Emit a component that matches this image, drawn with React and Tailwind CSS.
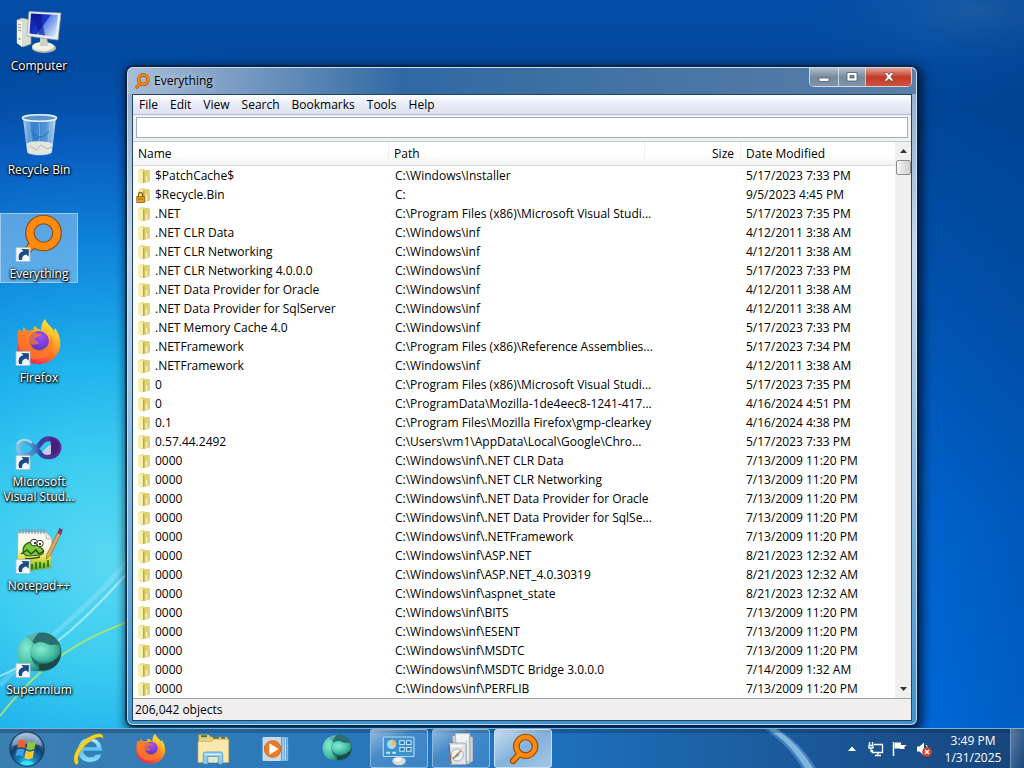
import React, { useState } from "react";

const INF = "C:\\Windows\\inf";
const OLD = "7/13/2009 11:20 PM";

const ROWS = [
  ["$PatchCache$", "C:\\Windows\\Installer", "5/17/2023 7:33 PM"],
  ["$Recycle.Bin", "C:", "9/5/2023 4:45 PM", true],
  [".NET", "C:\\Program Files (x86)\\Microsoft Visual Studi...", "5/17/2023 7:35 PM"],
  [".NET CLR Data", INF, "4/12/2011 3:38 AM"],
  [".NET CLR Networking", INF, "4/12/2011 3:38 AM"],
  [".NET CLR Networking 4.0.0.0", INF, "5/17/2023 7:33 PM"],
  [".NET Data Provider for Oracle", INF, "4/12/2011 3:38 AM"],
  [".NET Data Provider for SqlServer", INF, "4/12/2011 3:38 AM"],
  [".NET Memory Cache 4.0", INF, "5/17/2023 7:33 PM"],
  [".NETFramework", "C:\\Program Files (x86)\\Reference Assemblies...", "5/17/2023 7:34 PM"],
  [".NETFramework", INF, "4/12/2011 3:38 AM"],
  ["0", "C:\\Program Files (x86)\\Microsoft Visual Studi...", "5/17/2023 7:35 PM"],
  ["0", "C:\\ProgramData\\Mozilla-1de4eec8-1241-417...", "4/16/2024 4:51 PM"],
  ["0.1", "C:\\Program Files\\Mozilla Firefox\\gmp-clearkey", "4/16/2024 4:38 PM"],
  ["0.57.44.2492", "C:\\Users\\vm1\\AppData\\Local\\Google\\Chro...", "5/17/2023 7:33 PM"],
  ["0000", INF + "\\.NET CLR Data", OLD],
  ["0000", INF + "\\.NET CLR Networking", OLD],
  ["0000", INF + "\\.NET Data Provider for Oracle", OLD],
  ["0000", INF + "\\.NET Data Provider for SqlSe...", OLD],
  ["0000", INF + "\\.NETFramework", OLD],
  ["0000", INF + "\\ASP.NET", "8/21/2023 12:32 AM"],
  ["0000", INF + "\\ASP.NET_4.0.30319", "8/21/2023 12:32 AM"],
  ["0000", INF + "\\aspnet_state", "8/21/2023 12:32 AM"],
  ["0000", INF + "\\BITS", OLD],
  ["0000", INF + "\\ESENT", OLD],
  ["0000", INF + "\\MSDTC", OLD],
  ["0000", INF + "\\MSDTC Bridge 3.0.0.0", "7/14/2009 1:32 AM"],
  ["0000", INF + "\\PERFLIB", OLD],
];

function Defs() {
  return (
    <svg className="absolute size-0" aria-hidden="true">
      <defs>
        <linearGradient id="folder" x1="0" x2="1" y1="0" y2="0">
          <stop offset="0" stopColor="#f6f0b4" />
          <stop offset="0.55" stopColor="#e8da78" />
          <stop offset="1" stopColor="#d8c95f" />
        </linearGradient>
        <linearGradient id="screen" x1="0" x2="1" y1="0.2" y2="0.8">
          <stop offset="0" stopColor="#0a1a9c" />
          <stop offset="0.48" stopColor="#1d3bd0" />
          <stop offset="0.5" stopColor="#5c86e8" />
          <stop offset="1" stopColor="#d5e6fb" />
        </linearGradient>
        <linearGradient id="glass" x1="0" x2="1">
          <stop offset="0" stopColor="#d5ebfa" stopOpacity="0.85" />
          <stop offset="0.3" stopColor="#5fa2e2" stopOpacity="0.55" />
          <stop offset="0.7" stopColor="#7db5e8" stopOpacity="0.65" />
          <stop offset="1" stopColor="#dceefa" stopOpacity="0.9" />
        </linearGradient>
        <linearGradient id="fox" x1="0.8" y1="0" x2="0.25" y2="1">
          <stop offset="0" stopColor="#fff04a" />
          <stop offset="0.35" stopColor="#ffb022" />
          <stop offset="0.65" stopColor="#ff6a2c" />
          <stop offset="1" stopColor="#e8205c" />
        </linearGradient>
        <radialGradient id="foxglobe" cx="0.6" cy="0.3" r="0.8">
          <stop offset="0" stopColor="#a44cf5" />
          <stop offset="1" stopColor="#4a33b8" />
        </radialGradient>
        <radialGradient id="teal" cx="0.35" cy="0.35" r="0.8">
          <stop offset="0" stopColor="#86ecd2" />
          <stop offset="0.6" stopColor="#44bda2" />
          <stop offset="1" stopColor="#1c7a6c" />
        </radialGradient>
        <linearGradient id="vs" x1="0" x2="1">
          <stop offset="0" stopColor="#7fc4e6" />
          <stop offset="0.4" stopColor="#3b7fc4" />
          <stop offset="0.55" stopColor="#3a3f9e" />
          <stop offset="1" stopColor="#5a2b91" />
        </linearGradient>
        <radialGradient id="orb" cx="0.5" cy="0.95" r="0.9">
          <stop offset="0" stopColor="#35e0ff" />
          <stop offset="0.3" stopColor="#1580b8" />
          <stop offset="0.65" stopColor="#123e6c" />
          <stop offset="1" stopColor="#7fa6c6" />
        </radialGradient>
        <linearGradient id="ie" x1="0" x2="0" y1="0" y2="1">
          <stop offset="0" stopColor="#c9f1ff" />
          <stop offset="0.5" stopColor="#58c3f2" />
          <stop offset="1" stopColor="#8fdcfa" />
        </linearGradient>
        <linearGradient id="pad" x1="0" x2="0" y1="0" y2="1">
          <stop offset="0" stopColor="#ffffff" />
          <stop offset="0.45" stopColor="#f4f8d8" />
          <stop offset="0.65" stopColor="#e6e44a" />
          <stop offset="1" stopColor="#3f9e1f" />
        </linearGradient>
      </defs>
    </svg>
  );
}

function Svg({ size = "size-12", box = 48, children }) {
  return (
    <svg viewBox={`0 0 ${box} ${box}`} className={`${size} shrink-0`} aria-hidden="true">
      {children}
    </svg>
  );
}

function Shortcut() {
  return (
    <g>
      <rect x="1" y="33.5" width="14" height="14" fill="#f4f8fc" stroke="#a9bccb" strokeWidth="0.8" />
      <path d="M4 46c-1.200-5 .6-8.300 4.400-8.800L6.400 35l7.600.2-.4 7.600-2.200-2.400c-2.800.4-4.600 2-4.200 5.600z" fill="#174a86" />
    </g>
  );
}

function ComputerIcon() {
  return (
    <Svg>
      <path d="M2 14l5-2 9 2v24l-8 3-6-4z" fill="#d9dcd5" stroke="#8d9494" strokeWidth="0.7" />
      <path d="M2 14l5 2v25l-5-4z" fill="#f3f4ee" />
      <path d="M3 18l3 1M3 21l3 1M3 24l3 1" stroke="#8a9a8a" strokeWidth="1" />
      <circle cx="4.500" cy="33" r="1" fill="#62b846" />
      <ellipse cx="29" cy="42" rx="12" ry="5" fill="#b9b9b0" />
      <ellipse cx="28" cy="40.500" rx="11" ry="4.600" fill="#f0efe8" />
      <path d="M25 31h7l1 9h-8z" fill="#cfcfc8" />
      <path d="M14 5.500L46 7l-3 27-31-4z" fill="#eceef0" stroke="#98a0a8" strokeWidth="0.7" />
      <path d="M16 7.500l27 1.400-2.500 22-26-3.300z" fill="url(#screen)" />
      <path d="M18 7.800l8 .4 4 21.200-6-.8z" fill="#0a1690" opacity="0.6" />
    </Svg>
  );
}

function BinIcon() {
  return (
    <Svg>
      <path d="M8 8l4 34c1 5 23 5 25 0l4-34z" fill="url(#glass)" />
      <path d="M11.500 34l1 8c2 4 22 4 24 0l1-8c-4-3-22-4-26 0z" fill="#ece9df" opacity="0.95" />
      <path d="M15 36l6 4 5-5 6 4 5-2" stroke="#b9b6a8" strokeWidth="1" fill="none" />
      <path d="M14 13l3 20M35 13l-2 20M24.500 13v18" stroke="#e2f1fc" strokeWidth="0.8" opacity="0.4" fill="none" />
      <path d="M16 20c3 6 8 8 13 6l5-5M18 25l3 4 4-1" stroke="#2a62a8" strokeWidth="1.200" opacity="0.6" fill="none" />
      <ellipse cx="24.500" cy="8" rx="17" ry="3.200" fill="#5a93cc" stroke="#e8f4fc" strokeWidth="1.600" />
    </Svg>
  );
}

function EverythingIcon({ size, shortcut }) {
  return (
    <Svg size={size}>
      {shortcut ? (
        <g>
          <path d="M20 28L10 39" stroke="#8a4a10" strokeWidth="8" strokeLinecap="round" />
          <circle cx="28.500" cy="19" r="13.500" fill="none" stroke="#8a4a10" strokeWidth="9.600" />
          <path d="M20 28L10 39" stroke="#ff8a10" strokeWidth="6" strokeLinecap="round" />
          <circle cx="28.500" cy="19" r="13.500" fill="none" stroke="#ff8a10" strokeWidth="7.400" />
          <Shortcut />
        </g>
      ) : (
        <g>
          <path d="M19 31L9 42" stroke="#9a4a08" strokeWidth="9.500" strokeLinecap="round" />
          <circle cx="28" cy="20" r="14" fill="none" stroke="#9a4a08" strokeWidth="10" />
          <path d="M19 31L9 42" stroke="#ff8a10" strokeWidth="6" strokeLinecap="round" />
          <circle cx="28" cy="20" r="14" fill="none" stroke="#ff8a10" strokeWidth="6.500" />
        </g>
      )}
    </Svg>
  );
}

function FirefoxIcon({ size, shortcut }) {
  return (
    <Svg size={size}>
      <path d="M4 11l3 3c1-1 1-3 1-5 2 1 3 3 4 4l7-1c-1-2 0-3 1-4 2 3 5 3 6 5 0-5 1-9 4-12 2 5 6 7 9 12l1-3c5 7 6 14 5 19-2 10-10 17-21 17C11 46 1 38 2 26c0-6 0-10 2-15z" fill="url(#fox)" />
      <circle cx="24" cy="23" r="10" fill="url(#foxglobe)" />
      <path d="M3 16c5-4 12-5 18-1l6 1c-2 3-7 3-8 6 3 0 5 2 4 4-3 1-5 1-7 0 2 6 8 7 12 5 6-3 8-8 7-13 5 6 4 14-1 19-8 7-22 6-28-4-3-6-4-11-3-17z" fill="#ff7a28" opacity="0.7" />
      {shortcut && <Shortcut />}
    </Svg>
  );
}

function VisualStudioIcon() {
  return (
    <Svg>
      <path d="M3 26c1-7 9-8 14-3l8 8c5 6 18 5 19-5 0-10-13-12-18-5l-8 9c-5 5-13 4-15-4z" fill="none" stroke="url(#vs)" strokeWidth="5" />
      <path d="M28 29c4 7 16 5 16-4 0-6-4-9-9-9 2 5 1 10-7 13z" fill="#4a1f7c" />
      <path d="M27 30l9-8v10c-3 2-7 1-9-2z" fill="#d8eaf6" opacity="0.85" />
      <path d="M2 22c3-5 10-6 15-1" stroke="#bfe8f8" strokeWidth="2" fill="none" opacity="0.8" />
      <Shortcut />
    </Svg>
  );
}

function NotepadIcon() {
  return (
    <Svg>
      <path d="M3 6h28l6 7-1 29-29 4-5-6z" fill="url(#pad)" stroke="#9aa09a" strokeWidth="0.7" />
      <path d="M5 3v5M8 3v5M11 3v5M14 3v5M17 3v5M20 3v5M23 3v5M26 3v5M29 3v5" stroke="#8f959c" strokeWidth="1.200" />
      <path d="M31 6v7h6" fill="#e8ecd8" stroke="#9aa09a" strokeWidth="0.6" />
      <path d="M8 25c0-7 7-11 12-7l6 4c4 2 3 6-1 7l-11 1c-4 0-6-2-6-5z" fill="#7cc838" stroke="#2c5c16" strokeWidth="1.200" />
      <path d="M6 28l6-4 4 4 5-4 3 4 5-3M10 32c5 2 10 0 15-1" stroke="#23400f" strokeWidth="1.300" fill="none" />
      <circle cx="19" cy="16.500" r="3.400" fill="#fff" stroke="#333" strokeWidth="1" />
      <circle cx="25" cy="17.500" r="3.200" fill="#fff" stroke="#333" strokeWidth="1" />
      <circle cx="20" cy="17" r="1" />
      <circle cx="25" cy="18" r="1" />
      <path d="M17 43v-5M21 43v-7M25 42v-6M29 42v-5M33 41v-7" stroke="#176f14" strokeWidth="1.600" />
      <path d="M31 33l1-5L44 4l3 1.500L35 30z" fill="#e7a856" stroke="#8a5a22" strokeWidth="0.6" />
      <path d="M42.500 7l1.800-5 3.400 1.500L46 9z" fill="#7d3a6c" />
      <Shortcut />
    </Svg>
  );
}

function SupermiumIcon({ size, shortcut }) {
  return (
    <Svg size={size}>
      <circle cx="27" cy="22" r="19.500" fill="#2a6f70" />
      <path d="M12 6C0 14-1 30 10 38c6 4 13 4 18 1-7-2-11-7-12-13-1-5 0-9 3-12-2-3-4-6-7-8z" fill="url(#teal)" />
      <path d="M11 7c3-2 8-4 13-4-3 2-5 5-6 8z" fill="#5fb0a8" />
      <path d="M16 18c3-6 10-8 16-4 4 2 8 0 12 1 3 8-1 14-9 17-9 3-22-2-19-14z" fill="url(#teal)" />
      <path d="M24 40c11 2 21-5 22-17-4 8-13 12-22 11z" fill="#1a4a48" />
      {shortcut && <Shortcut />}
    </Svg>
  );
}

function StartOrb() {
  return (
    <Svg size="size-9">
      <circle cx="24" cy="24" r="23.500" fill="#183a5e" />
      <circle cx="24" cy="24" r="22" fill="url(#orb)" />
      <path d="M4 20C7 8 15 3 24 3s17 5 20 17c-9-4-30-4-40 0z" fill="#dcebf6" opacity="0.4" />
      <path d="M13 13c4-2 7-2 10 0l-2 10c-3-2-7-2-10 0z" fill="#f0622c" />
      <path d="M25 14c4 2 7 2 11 0l-2 10c-4 2-8 2-11 0z" fill="#8cc63e" />
      <path d="M10.500 25c4-2 7-2 10 0l-2 9c-3-2-7-2-10 0z" fill="#3ba0e6" />
      <path d="M22.500 26c3 2 7 2 11 0l-2 10c-4 2-8 2-11 0z" fill="#fdc92c" />
      <ellipse cx="24" cy="43" rx="9" ry="3" fill="#2ee6ff" opacity="0.9" />
    </Svg>
  );
}

function IeIcon() {
  return (
    <Svg size="size-8">
      <path d="M25 7c11 0 19 8 19 20H16c0 5 4 9 10 9 4 0 7-1 8-4h9c-2 8-9 12-18 12-11 0-18-8-18-18S14 7 25 7zm-9 14h19c0-5-4-8-9.500-8S16 16 16 21z" fill="url(#ie)" stroke="#2488c8" strokeWidth="1" fillRule="evenodd" />
      <path d="M4 47C-5 36 12 8 34 2c8-2 12 0 11 6-4-4-13-1-20 5C13 21 5 35 8 43c0 3-2 5-4 4z" fill="#f8d428" stroke="#c79a12" strokeWidth="0.7" />
    </Svg>
  );
}

function ExplorerIcon() {
  return (
    <Svg size="size-9">
      <path d="M5 5h13l3 3h22v32H5z" fill="#e9ce78" stroke="#b8964a" strokeWidth="0.8" />
      <path d="M8 7h8M24 9h8M35 9h5" stroke="#4b6d58" strokeWidth="2.500" />
      <path d="M4 14h18l3-3h20v31H4z" fill="#f9e9ad" stroke="#c7a85a" strokeWidth="0.8" />
      <path d="M11 44V31q0-3 3-3h20q3 0 3 3v13h-6V34H17v10z" fill="#8dcdf0" stroke="#4a94c4" strokeWidth="1" />
      <path d="M13 31h22" stroke="#e4f6ff" strokeWidth="1.500" />
      <path d="M20 37h8v5h-8z" fill="#cfe8f4" />
    </Svg>
  );
}

function PlayerIcon() {
  return (
    <Svg size="size-8">
      <path d="M10 7h33v34H10z" fill="#5f9fd4" stroke="#b7d8ef" strokeWidth="1" />
      <path d="M36 8v32M39.500 8v32" stroke="#d5e9f7" strokeWidth="1.600" />
      <path d="M6 7h26v34H6z" fill="#c8d7e4" stroke="#eef5fa" strokeWidth="1" />
      <circle cx="20.500" cy="24" r="12.500" fill="#f07a20" stroke="#c95508" strokeWidth="1" />
      <path d="M15.500 15.500l14 8.500-14 8.500z" fill="#fff" />
    </Svg>
  );
}

function ControlPanelIcon() {
  return (
    <Svg size="size-9">
      <rect x="3" y="8" width="41" height="26" rx="1.500" fill="#4291cf" stroke="#a8dcfa" strokeWidth="1.600" />
      <circle cx="14" cy="18" r="6" fill="#a8dcf6" />
      <path d="M14 18v-7a7 7 0 0 1 6 9z" fill="#f1c04a" />
      <path d="M7 29h5M15 29h5" stroke="#bfe6fa" strokeWidth="2.500" />
      <path d="M25 13h6v5h-6zM34 13h6v5h-6zM25 22h6v5h-6zM34 22h6v5h-6z" fill="#3074b4" stroke="#c5eaff" strokeWidth="1.400" />
      <ellipse cx="24" cy="40" rx="9" ry="5.500" fill="#d7dade" />
      <ellipse cx="22" cy="38" rx="5" ry="2.500" fill="#f8f9fa" />
    </Svg>
  );
}

function InstallerIcon() {
  return (
    <Svg size="size-9">
      <path d="M12 6h22l6 2v32l-6 4H16z" fill="#cfd5d8" stroke="#7c888e" strokeWidth="0.8" />
      <path d="M16 3h20v38H20z" fill="#f1f3f4" stroke="#8a969c" strokeWidth="0.8" />
      <path d="M8 16h20l3 2v27H10z" fill="#dfe3e5" stroke="#7c888e" strokeWidth="0.8" />
      <path d="M31 12v28M35 6v34" stroke="#aab3b8" strokeWidth="1.200" />
      <path d="M11 20h15" stroke="#fff" strokeWidth="2" />
      <circle cx="19" cy="32" r="8" fill="#eef3f6" stroke="#93a3ac" strokeWidth="1" />
      <path d="M19 32l5-6M19 32l-6 5" stroke="#c9834f" strokeWidth="2.200" />
      <circle cx="19" cy="32" r="2" fill="#7b8f9c" />
      <path d="M8 18l3 26" stroke="#8a4a36" strokeWidth="1.200" />
    </Svg>
  );
}

function FolderIcon({ locked }) {
  return (
    <Svg size="size-4" box={16}>
      <path d="M2 2.500L5 1h3l1 1h4.500L14 13l-4 1.500-5 1L2 13.500z" fill="url(#folder)" />
      <path d="M9 2.500h4.500L14 13l-5 1.500z" fill="#e0d272" />
      <path d="M2 2.500l5 1V15l-5-1.500z" fill="#f5efb0" />
      <path d="M7 3.500V15l1.500-.3V3z" fill="#bca944" />
      <path d="M10.500 8v5.500" stroke="#f8f2c4" strokeWidth="1.500" />
      {locked && (
        <g>
          <path d="M2.500 10V7.500a2 2 0 0 1 4 0V10" fill="none" stroke="#8a6516" strokeWidth="1.300" />
          <rect x="0.800" y="9.500" width="7.500" height="6" fill="#e2a41c" stroke="#8f5d0a" strokeWidth="0.8" />
          <path d="M2 12h5" stroke="#8f5d0a" strokeWidth="0.900" />
        </g>
      )}
    </Svg>
  );
}

const DESKTOP = [
  { label: "Computer", icon: <ComputerIcon /> },
  { label: "Recycle Bin", icon: <BinIcon /> },
  { label: "Everything", icon: <EverythingIcon shortcut />, selected: true },
  { label: "Firefox", icon: <FirefoxIcon shortcut /> },
  { label: "Microsoft Visual Stud...", icon: <VisualStudioIcon /> },
  { label: "Notepad++", icon: <NotepadIcon /> },
  { label: "Supermium", icon: <SupermiumIcon shortcut /> },
];

function DesktopIcons() {
  return (
    <ul className="w-[78px] shrink-0 pt-[5px]">
      {DESKTOP.map((d) => (
        <li key={d.label} className="h-[104px]">
          <button
            type="button"
            className={`flex w-full flex-col items-center gap-1 border pb-px text-center leading-[15px] text-white [text-shadow:0_1px_2px_#000,1px_1px_2px_#000,0_0_3px_#000] ${
              d.selected ? "border-[#9cc8f0] bg-[#8fc2ee]/60" : "border-transparent"
            }`}
          >
            {d.icon}
            <span>{d.label}</span>
          </button>
        </li>
      ))}
    </ul>
  );
}

function Wallpaper() {
  return (
    <svg viewBox="0 0 1024 768" preserveAspectRatio="none" className="absolute inset-0 size-full" aria-hidden="true">
      <defs>
        <linearGradient id="bgv" x1="0" x2="0" y1="0" y2="1">
          <stop offset="0" stopColor="#054ca8" />
          <stop offset="0.14" stopColor="#004697" />
          <stop offset="0.4" stopColor="#0053b0" />
          <stop offset="0.68" stopColor="#0063ce" />
          <stop offset="1" stopColor="#006adb" />
        </linearGradient>
        <radialGradient id="bgl" gradientUnits="userSpaceOnUse" cx="0" cy="0" r="1" gradientTransform="translate(110 560) scale(600 520)">
          <stop offset="0" stopColor="#5ad8f2" />
          <stop offset="0.2" stopColor="#3cccf0" />
          <stop offset="0.38" stopColor="#1fb2ec" />
          <stop offset="0.6" stopColor="#1088de" stopOpacity="0.95" />
          <stop offset="0.8" stopColor="#0a62c6" stopOpacity="0.8" />
          <stop offset="1" stopColor="#0550b4" stopOpacity="0" />
        </radialGradient>
        <radialGradient id="bgt" gradientUnits="userSpaceOnUse" cx="0" cy="0" r="1" gradientTransform="translate(980 10) scale(200 80)">
          <stop offset="0" stopColor="#3a7aa8" stopOpacity="0.45" />
          <stop offset="1" stopColor="#00499f" stopOpacity="0" />
        </radialGradient>
        <linearGradient id="bgr" x1="0" x2="1">
          <stop offset="0.9" stopColor="#003a80" stopOpacity="0" />
          <stop offset="1" stopColor="#003a80" stopOpacity="0.25" />
        </linearGradient>
      </defs>
      <path d="M0 0h1024v768H0z" fill="url(#bgv)" />
      <path d="M0 0h1024v768H0z" fill="url(#bgl)" />
      <path d="M0 0h1024v768H0z" fill="url(#bgt)" />
      <path d="M0 0h1024v768H0z" fill="url(#bgr)" />
      <g fill="none">
        <path d="M0 676C50 655 90 615 130 570" stroke="#d8f8fc" strokeWidth="2" opacity="0.6" />
        <path d="M0 685C60 625 100 600 140 545" stroke="#e0fafc" strokeWidth="5" opacity="0.2" />
        <path d="M0 716C40 665 80 635 150 615" stroke="#a8e478" strokeWidth="2" opacity="0.9" />
      </g>
    </svg>
  );
}

function Caption() {
  const base = "flex h-[18px] items-center justify-center";
  return (
    <div className="mr-1 flex self-start overflow-hidden rounded-b-[5px] border border-t-0 border-white/70">
      <button type="button" aria-label="Minimize" className={`${base} w-7 bg-linear-to-b from-[#b3c0cd] via-[#76899c] via-50% to-[#7d95aa]`}>
        <svg viewBox="0 0 14 12" className="h-3 w-3.5"><path d="M2 7h10v3.500H2z" fill="#fff" stroke="#46586b" strokeWidth="0.8" /></svg>
      </button>
      <button type="button" aria-label="Maximize" className={`${base} w-[27px] border-l border-white/60 bg-linear-to-b from-[#b3c0cd] via-[#76899c] via-50% to-[#7d95aa]`}>
        <svg viewBox="0 0 14 12" className="h-3 w-3.5"><path d="M2 1.500h10v8.500H2zM5 4.500v2.500h4V4.500z" fill="#fff" stroke="#46586b" strokeWidth="0.8" fillRule="evenodd" /></svg>
      </button>
      <button type="button" aria-label="Close" className={`${base} w-[46px] border-l border-white/60 bg-linear-to-b from-[#e0a398] via-[#c23a28] via-50% to-[#d0523a]`}>
        <svg viewBox="0 0 14 12" className="h-3 w-3.5"><path d="M2 1.500h3.200L7 3.800l1.800-2.300H12L8.800 5.700 12 10H8.800L7 7.700 5.200 10H2l3.200-4.300z" fill="#fff" stroke="#6b2c26" strokeWidth="0.6" /></svg>
      </button>
    </div>
  );
}

function Scrollbar() {
  return (
    <div className="flex w-4 shrink-0 flex-col items-center bg-[#efefef]">
      <button type="button" aria-label="Scroll up" className="flex h-[18px] w-full items-center justify-center">
        <svg viewBox="0 0 7 4" className="h-1 w-[7px]"><path d="M0 4l3.500-4L7 4z" fill="#333" /></svg>
      </button>
      <div className="h-[15px] w-[15px] rounded-xs border border-[#8f8f8f] bg-linear-to-r from-[#f5f5f5] to-[#cfcfd0]" />
      <div className="flex-1" />
      <button type="button" aria-label="Scroll down" className="flex h-[18px] w-full items-center justify-center">
        <svg viewBox="0 0 7 4" className="h-1 w-[7px]"><path d="M0 0l3.500 4L7 0z" fill="#333" /></svg>
      </button>
    </div>
  );
}

function FileTable() {
  const head = "h-6 border-b border-[#dcdcdc] p-0 font-normal";
  return (
    <table className="w-full table-fixed border-separate border-spacing-0">
      <colgroup>
        <col className="w-64" />
        <col className="w-64" />
        <col className="w-24" />
        <col />
      </colgroup>
      <thead className="bg-linear-to-b from-white from-50% to-[#f2f2f4]">
        <tr>
          <th className={`${head} border-r border-r-[#f0f0f2] pl-[5px] text-left`}>Name</th>
          <th className={`${head} border-r border-r-[#f0f0f2] pl-[5px] text-left`}>Path</th>
          <th className={`${head} border-r border-r-[#f0f0f2] pr-[6px] text-right`}>Size</th>
          <th className={`${head} pl-[5px] text-left`}>Date Modified</th>
        </tr>
      </thead>
      <tbody>
        {ROWS.map(([name, path, date, locked], i) => (
          <tr key={i} className="h-[19px] whitespace-nowrap">
            <td className="p-0 pl-[3px]">
              <span className="flex h-[19px] items-center gap-[3px]">
                <FolderIcon locked={locked} />
                {name}
              </span>
            </td>
            <td className="p-0 pl-1.5">{path}</td>
            <td className="p-0" />
            <td className="p-0 pl-[5px]">{date}</td>
          </tr>
        ))}
      </tbody>
    </table>
  );
}

function EverythingWindow() {
  const [query, setQuery] = useState("");
  return (
    <section className="mt-[66px] mr-[106px] mb-[2px] ml-12 flex min-w-0 flex-1 flex-col rounded-[7px] border border-[#10253c] bg-linear-to-b from-[#8fa9c6] from-0% via-[#c3d6ea] via-28% to-[#3d93cc] to-100% px-[5px] pb-[4px] text-black shadow-[0_0_0_1px_rgba(0,20,50,0.5),2px_3px_10px_3px_rgba(0,15,40,0.75),inset_0_0_0_1px_rgba(220,240,255,0.75)]">
      <header className="-mx-1 flex h-[27px] items-center rounded-t-[6px] border-t border-[#c9dbec] bg-linear-to-r from-[#a9bdd6] via-[#2f69a3] via-35% to-[#5b7fa6] pl-1.5">
        <EverythingIcon size="size-4" />
        <h1 className="flex-1 pl-1 [text-shadow:0_0_6px_rgba(255,255,255,0.7)]">Everything</h1>
        <Caption />
      </header>
      <div className="flex min-h-0 flex-1 flex-col border border-[#1f4468] bg-white">
        <nav className="flex h-5 items-center gap-3 border-b border-[#b8bcd0] bg-linear-to-b from-white via-[#e8ebf6] via-50% to-[#dde1f2] pl-1.5">
          {["File", "Edit", "View", "Search", "Bookmarks", "Tools", "Help"].map((m) => (
            <button key={m} type="button">{m}</button>
          ))}
        </nav>
        <div className="border-b border-[#c4c8cf] bg-[#f0f1f4] px-[3px] pt-0.5 pb-[3px]">
          <input
            type="text"
            aria-label="Search"
            value={query}
            onChange={(e) => setQuery(e.target.value)}
            className="block h-[21px] w-full border border-[#a5abbd] bg-white px-1 outline-none"
          />
        </div>
        <div className="flex h-0 min-h-0 flex-1">
          <div className="min-w-0 flex-1 overflow-hidden">
            <FileTable />
          </div>
          <Scrollbar />
        </div>
        <footer className="flex h-[22px] items-center border-t border-[#a3a3a3] bg-[#f0eeef] pl-0.5">206,042 objects</footer>
      </div>
    </section>
  );
}

const TASKS = [
  ["Internet Explorer", <IeIcon />, ""],
  ["Firefox", <FirefoxIcon size="size-8" />, ""],
  ["Windows Explorer", <ExplorerIcon />, ""],
  ["Media Player", <PlayerIcon />, ""],
  ["Supermium", <SupermiumIcon size="size-8" />, ""],
  ["Control Panel", <ControlPanelIcon />, "open"],
  ["Programs", <InstallerIcon />, "open"],
  ["Everything", <EverythingIcon size="size-8" />, "active"],
];

const TASK_STYLE = {
  "": "border-transparent",
  open: "border-[#9cc4e4]/80 bg-linear-to-br from-white/50 via-white/15 via-40% to-white/10",
  active: "border-[#c4e0f4] bg-linear-to-br from-white/75 via-white/45 to-white/60",
};

function Taskbar() {
  return (
    <footer className="relative flex h-10 shrink-0 items-stretch overflow-hidden border-t border-[#7fb0d4] bg-linear-to-r from-[#3b7fb0] via-[#1f74c2] via-50% to-[#17457c] text-white">
      <svg viewBox="0 0 1024 40" preserveAspectRatio="none" className="absolute inset-0 size-full" aria-hidden="true">
        <path d="M758 -4C778 8 794 24 804 44h14C808 24 792 8 772 -4z" fill="#8cc8f4" opacity="0.35" />
        <path d="M762 -4C782 8 797 24 807 44h8C805 24 789 8 770 -4z" fill="#a8d8f8" opacity="0.6" />
        <path d="M0 0h1024v4H0z" fill="#0a2848" opacity="0.3" />
      </svg>
      <button type="button" aria-label="Start" className="relative flex w-[54px] items-center justify-center">
        <StartOrb />
      </button>
      <div className="relative flex gap-1 pl-1.5">
        {TASKS.map(([name, icon, state]) => (
          <button key={name} type="button" aria-label={name} className={`flex w-[58px] items-center justify-center rounded-[3px] border ${TASK_STYLE[state]}`}>
            {icon}
          </button>
        ))}
      </div>
      <div className="relative ml-auto flex items-center">
        <button type="button" aria-label="Show hidden icons" className="mr-3">
          <svg viewBox="0 0 8 5" className="h-[5px] w-2"><path d="M0 5l4-4.500L8 5z" fill="#fff" /></svg>
        </button>
        <button type="button" aria-label="Network" className="mr-2">
          <svg viewBox="0 0 16 16" className="size-4" fill="none" stroke="#fff" strokeWidth="1.300">
            <path d="M6 3.500h8.500v8H4.500V9M7 14.500h6M10 12v2" />
            <path d="M1.500 1v3M4.500 1v3M1 4.500h4v2.500H1zM3 7v3.500h2" />
          </svg>
        </button>
        <button type="button" aria-label="Action Center" className="mr-2">
          <svg viewBox="0 0 16 16" className="size-4"><path d="M1.500 1v14" stroke="#fff" strokeWidth="1.500" /><path d="M2.500 1.500H9V4h5.500L12 6.500 13 8H8V7.500H2.500z" fill="#fff" /></svg>
        </button>
        <button type="button" aria-label="Volume muted" className="mr-3">
          <svg viewBox="0 0 16 16" className="size-4"><path d="M1 5.500h2.500L8 1.500v13L3.500 10.500H1z" fill="#fff" /><path d="M10 4c1.500 1.500 2 4 1 6" stroke="#fff" fill="none" /><circle cx="11" cy="11" r="4.800" fill="#d5402f" /><path d="M9 9l4 4M13 9l-4 4" stroke="#fff" strokeWidth="1.500" /></svg>
        </button>
        <button type="button" className="mr-2 w-[58px] text-center leading-[17px]">
          <span className="block">3:49 PM</span>
          <span className="block">1/31/2025</span>
        </button>
        <button type="button" aria-label="Show desktop" className="h-full w-3.5 border-l border-[#8fb4d4]/70 bg-linear-to-br from-white/30 to-transparent" />
      </div>
    </footer>
  );
}

export default function App() {
  return (
    <div className="relative flex h-screen flex-col overflow-hidden font-['Open_Sans','Noto_Sans',sans-serif] text-[12px] leading-4">
      <Defs />
      <Wallpaper />
      <main className="relative flex min-h-0 flex-1">
        <DesktopIcons />
        <EverythingWindow />
      </main>
      <Taskbar />
    </div>
  );
}
